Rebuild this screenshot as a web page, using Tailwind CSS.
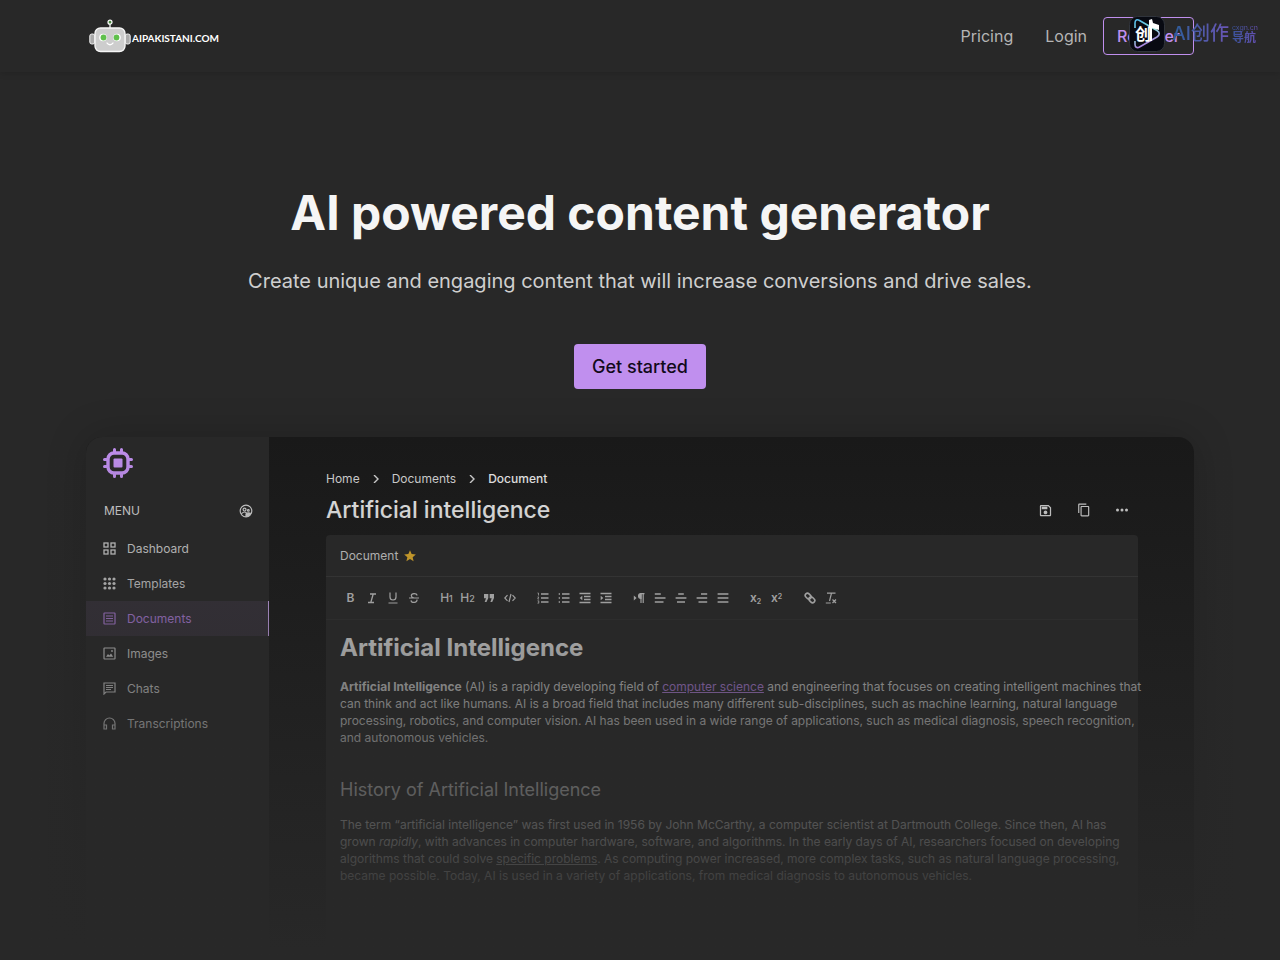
<!DOCTYPE html>
<html lang="en">
<head>
<meta charset="utf-8">
<meta name="viewport" content="width=device-width, initial-scale=1">
<title>AI powered content generator</title>
<script src="https://cdn.jsdelivr.net/npm/@tailwindcss/browser@4"></script>
</head>
<body class="flex min-h-screen flex-col bg-[#282828] font-['Inter',sans-serif] text-[#d6d6d6]">

<header class="relative shadow-[0_2px_6px_rgba(0,0,0,0.12)]">
  <div class="mx-auto flex h-18 w-full max-w-[1140px] items-center justify-between px-4">
    <a href="#" class="flex items-center pl-[3px]" aria-label="AIPAKISTANI.COM">
      <svg class="h-[34px] w-[43px]" viewBox="0 0 43 34" fill="none">
        <path d="M21 10V4" stroke="#d8d8d8" stroke-width="1.5"/>
        <circle cx="21" cy="3.2" r="2" fill="#4c8a42" stroke="#fff" stroke-width="1.2"/>
        <rect x=".8" y="15" width="5" height="10" rx="2" fill="#aaa" stroke="#f2f2f2"/>
        <rect x="36.2" y="15" width="5" height="10" rx="2" fill="#aaa" stroke="#f2f2f2"/>
        <rect x="6" y="9" width="30" height="23.5" rx="5.5" fill="#cdcdcd" stroke="#f6f6f6" stroke-width="1.4"/>
        <circle cx="14" cy="18.500" r="3.800" fill="#fff"/><circle cx="14.500" cy="18.500" r="2.900" fill="#5fc04c"/>
        <circle cx="28" cy="18.500" r="3.800" fill="#fff"/><circle cx="27.500" cy="18.500" r="2.900" fill="#5fc04c"/>
        <path d="M18 24c1.500 2.400 4.500 2.400 6 0" stroke="#fff" stroke-width="1.400" stroke-linecap="round"/>
      </svg>
      <span class="pt-1 font-['Lato',sans-serif] text-[10px] font-bold text-white">AIPAKISTANI.COM</span>
    </a>
    <nav class="flex items-center text-base text-[#b5b5b5]">
      <a href="#" class="px-4">Pricing</a>
      <a href="#" class="px-4">Login</a>
      <a href="#" class="rounded border border-[#c08fee] px-[13px] py-[6px] font-medium text-[#c08fee]">Register</a>
    </nav>
  </div>
  <div class="pointer-events-none absolute top-4 right-[22px] flex items-center gap-[7px]">
    <svg class="size-9" viewBox="0 0 36 36" fill="none">
      <defs><linearGradient id="play" x1="8" y1="4" x2="20" y2="32" gradientUnits="userSpaceOnUse"><stop stop-color="#55bbea"/><stop offset=".5" stop-color="#8be0d8"/><stop offset="1" stop-color="#b55be0"/></linearGradient></defs>
      <rect x=".5" y=".5" width="35" height="35" rx="8" fill="#080a12" stroke="#30343c"/>
      <path d="M6 12V7c0-3 2-4 4.500-2.500L28 14.500c3 2 3 4.500 0 6.500l-17.500 10C8 32.500 6 31 6 28.500V25" stroke="url(#play)" stroke-width="1.600"/>
      <path d="M20 4l3-1 1 4 6 2v5l-7-2v13h-2V12h-1z" fill="#fff"/>
      <text x="6" y="24" fill="#fff" font-size="16" font-weight="700" font-family="Noto Sans CJK SC, sans-serif">创</text>
    </svg>
    <span class="bg-linear-to-r from-[#285c98] to-[#6a56b8] bg-clip-text font-['Inter','Noto_Sans_CJK_SC',sans-serif] text-[19px] leading-7 font-medium text-transparent">AI创作</span>
    <span class="-ml-1 flex flex-col bg-linear-to-r from-[#38539a] to-[#6650b4] bg-clip-text font-['Inter','Noto_Sans_CJK_SC',sans-serif] text-transparent">
      <span class="text-[7px] leading-[7px]">cxgn.cn</span>
      <span class="text-[12px] leading-[14px] font-bold">导航</span>
    </span>
  </div>
</header>

<main class="mx-auto flex w-full max-w-[1140px] flex-1 flex-col px-4 pt-[110px]">
  <section class="flex flex-col items-center text-center">
    <h1 class="text-5xl leading-[62px] font-bold text-[#f5f5f5]">AI powered content generator</h1>
    <p class="mt-[22px] text-xl leading-[30px] text-[#cfcfcf]">Create unique and engaging content that will increase conversions and drive sales.</p>
    <a href="#" class="mt-12 rounded bg-[#c08fee] px-[18px] py-[9px] text-lg leading-[27px] font-medium text-[#120a1a]">Get started</a>
  </section>

  <section class="relative mt-12 flex flex-1 flex-col" aria-label="Editor preview">
    <div class="flex flex-1 overflow-hidden rounded-t-2xl bg-[#191919] text-xs shadow-[0_0_40px_rgba(0,0,0,0.2)]">
      <aside class="w-[183px] shrink-0 bg-[#282828]">
        <svg class="mt-[11px] ml-[17px] size-[30px] text-[#c08fee]" viewBox="0 0 30 30" fill="none" stroke="currentColor">
          <rect x="5" y="5" width="20" height="20" rx="6" stroke-width="3.400"/>
          <rect x="10.500" y="10.500" width="9" height="9" rx="1" fill="currentColor" stroke="none"/>
          <path d="M11.500 4V1.500M18.500 4V1.500M11.500 28.500V26M18.500 28.500V26M4 11.500H1.500M4 18.500H1.500M28.500 11.500H26M28.500 18.500H26" stroke-width="3" stroke-linecap="round"/>
        </svg>
        <div class="mt-[23px] flex h-[20px] items-center justify-between pr-4 pl-[18px]">
          <span>MENU</span>
          <svg class="size-[14px]" viewBox="0 0 24 24" fill="none" stroke="currentColor" stroke-width="2"><circle cx="12" cy="12" r="10"/><circle cx="9.500" cy="9.500" r="2.500"/><circle cx="16" cy="11" r="1.500"/><path d="M4 17c2-3 6-4 9-2"/><path d="M12 21v-4c2-2 5-2 8-1l-3 4z" fill="currentColor"/></svg>
        </div>
        <nav class="mt-[10px]">
          <a href="#" class="flex h-[35px] items-center gap-[11px] pl-[17px]">
            <svg class="size-[13px]" viewBox="0 0 13 13" fill="none" stroke="currentColor" stroke-width="1.300"><rect x="1" y="1" width="4" height="4"/><rect x="8" y="1" width="4" height="4"/><rect x="1" y="8" width="4" height="4"/><rect x="8" y="8" width="4" height="4"/></svg>Dashboard</a>
          <a href="#" class="flex h-[35px] items-center gap-[11px] pl-[17px]">
            <svg class="size-[13px]" viewBox="0 0 13 13" fill="currentColor"><circle cx="2" cy="2" r="1.600"/><circle cx="6.500" cy="2" r="1.600"/><circle cx="11" cy="2" r="1.600"/><circle cx="2" cy="6.500" r="1.600"/><circle cx="6.500" cy="6.500" r="1.600"/><circle cx="11" cy="6.500" r="1.600"/><circle cx="2" cy="11" r="1.600"/><circle cx="6.500" cy="11" r="1.600"/><circle cx="11" cy="11" r="1.600"/></svg>Templates</a>
          <a href="#" class="flex h-[35px] items-center gap-[11px] border-r border-[#d8b0ff] bg-[#c08fee]/10 pl-[17px] text-[#b480e0]">
            <svg class="size-[13px]" viewBox="0 0 13 13" fill="none" stroke="currentColor" stroke-width="1.200"><rect x="1" y="1" width="11" height="11" rx=".5"/><path d="M3 4h7M3 6.500h7M3 9h7"/></svg>Documents</a>
          <a href="#" class="flex h-[35px] items-center gap-[11px] pl-[17px]">
            <svg class="size-[13px]" viewBox="0 0 13 13" fill="none" stroke="currentColor" stroke-width="1.200"><rect x="1" y="1" width="11" height="11" rx=".5"/><path d="M3 9.800 5 7l1.300 1.500L8 6.500l2.200 3.300z" fill="currentColor" stroke="none"/><circle cx="9" cy="4" r=".9" fill="currentColor" stroke="none"/></svg>Images</a>
          <a href="#" class="flex h-[35px] items-center gap-[11px] pl-[17px]">
            <svg class="size-[13px]" viewBox="0 0 13 13" fill="none" stroke="currentColor" stroke-width="1.200"><path d="M1 12V1h11v9H3z"/><path d="M3 3.500h7M3 5.500h7M3 7.500h5"/></svg>Chats</a>
          <a href="#" class="flex h-[35px] items-center gap-[11px] pl-[17px]">
            <svg class="size-[13px]" viewBox="0 0 13 13" fill="none" stroke="currentColor" stroke-width="1.200"><path d="M1 8V6.500a5.500 5.500 0 0 1 11 0V8M1 8v4h2.500V8zM9.500 8v4H12V8z"/></svg>Transcriptions</a>
        </nav>
      </aside>

      <div class="flex min-w-0 flex-1 flex-col px-14 pt-8 pl-[57px]">
        <nav class="flex h-[20px] items-center gap-3" aria-label="Breadcrumb">
          <a href="#">Home</a>
          <svg class="size-2" viewBox="0 0 8 8" fill="none" stroke="currentColor" stroke-width="1.400"><path d="M2 0l4 4-4 4"/></svg>
          <a href="#">Documents</a>
          <svg class="size-2" viewBox="0 0 8 8" fill="none" stroke="currentColor" stroke-width="1.400"><path d="M2 0l4 4-4 4"/></svg>
          <span class="font-medium text-[#ececec]">Document</span>
        </nav>
        <div class="mt-[5px] flex h-8 items-center justify-between">
          <h2 class="text-[23px] font-medium text-[#f0f0f0]">Artificial intelligence</h2>
          <div class="flex gap-6 pr-[9px]">
            <button type="button" aria-label="Save"><svg class="size-[15px]" viewBox="0 0 24 24" fill="currentColor"><path d="M17 3H5c-1.110 0-2 .9-2 2v14c0 1.100.89 2 2 2h14c1.100 0 2-.9 2-2V7l-4-4zm2 16H5V5h11.170L19 7.830V19zm-7-7c-1.660 0-3 1.340-3 3s1.340 3 3 3 3-1.340 3-3-1.340-3-3-3zM6 6h9v4H6z"/></svg></button>
            <button type="button" aria-label="Copy"><svg class="size-[14px]" viewBox="0 0 24 24" fill="currentColor"><path d="M16 1H4c-1.100 0-2 .9-2 2v14h2V3h12V1zm3 4H8c-1.100 0-2 .9-2 2v14c0 1.100.9 2 2 2h11c1.100 0 2-.9 2-2V7c0-1.100-.9-2-2-2zm0 16H8V7h11v14z"/></svg></button>
            <button type="button" aria-label="More"><svg class="size-[14px]" viewBox="0 0 14 14" fill="currentColor"><circle cx="2.500" cy="7" r="1.500"/><circle cx="7" cy="7" r="1.500"/><circle cx="11.500" cy="7" r="1.500"/></svg></button>
          </div>
        </div>

        <article class="mt-[9px] flex-1 rounded-t-sm bg-[#282828]">
          <div class="flex h-[42px] items-center gap-[5px] border-b border-[#383838] px-[14px]">
            <span>Document</span>
            <svg class="size-[14px] text-[#edb62b]" viewBox="0 0 24 24" fill="currentColor"><path d="M12 17.270L18.180 21l-1.640-7.030L22 9.240l-7.190-.61L12 2 9.190 8.630 2 9.240l5.460 4.730L5.820 21z"/></svg>
          </div>
          <div class="flex h-[43px] items-center gap-3 border-b border-[#303030] px-[14px] *:flex [&_button]:flex [&_button]:h-5 [&_button]:w-[21px] [&_button]:items-center [&_button]:justify-center [&_svg]:size-3">
            <div>
              <button type="button" aria-label="Bold"><span class="font-semibold">B</span></button>
              <button type="button" aria-label="Italic"><svg viewBox="0 0 12 12" fill="none" stroke="currentColor" stroke-width="1.300"><path d="M4 2h6M2 10.500h6M7.200 2 4.800 10.500"/></svg></button>
              <button type="button" aria-label="Underline"><svg viewBox="0 0 12 12" fill="none" stroke="currentColor" stroke-width="1.200"><path d="M3 .5v4.500a3 3 0 0 0 6 0V.5M1.500 11h9"/></svg></button>
              <button type="button" aria-label="Strikethrough"><svg viewBox="0 0 12 12" fill="none" stroke="currentColor" stroke-width="1.200"><path d="M9 3.500C8.600 1 3.300 1 3.300 3.700c0 1.300 1.500 1.900 2.700 2.300M1 6h10M9 7.500c.5 3.500-5.500 4-6 .8"/></svg></button>
            </div>
            <div>
              <button type="button" aria-label="Heading 1"><span class="font-medium">H<span class="text-[9px]">1</span></span></button>
              <button type="button" aria-label="Heading 2"><span class="font-medium">H<span class="text-[9px]">2</span></span></button>
              <button type="button" aria-label="Quote"><svg viewBox="0 0 12 12" fill="currentColor"><path d="M1 2h4.300v4L3.500 10H1.700L3 6.300H1zM6.700 2H11v4L9.200 10H7.400l1.300-3.700h-2z"/></svg></button>
              <button type="button" aria-label="Code"><svg viewBox="0 0 12 12" fill="none" stroke="currentColor" stroke-width="1.200"><path d="M3.500 3.200.8 6l2.700 2.800M8.500 3.200 11.200 6 8.500 8.800M7 2 5 10"/></svg></button>
            </div>
            <div>
              <button type="button" aria-label="Numbered list"><svg viewBox="0 0 12 12" fill="none" stroke="currentColor" stroke-width="1.300"><path d="M4 2h7.500M4 6h7.500M4 10h7.500"/><path d="M.5 1h1v2.500M.5 5h1.300L.7 7h1.300M.5 8.800h1.300v2.400H.5M1 10h.8" stroke-width=".8"/></svg></button>
              <button type="button" aria-label="Bulleted list"><svg viewBox="0 0 12 12" fill="none" stroke="currentColor" stroke-width="1.300"><path d="M4 2h7.500M4 6h7.500M4 10h7.500M.7 2H2M.7 6H2M.7 10H2"/></svg></button>
              <button type="button" aria-label="Outdent"><svg viewBox="0 0 12 12" fill="none" stroke="currentColor" stroke-width="1.300"><path d="M.5 1.500h11M5 4.500h6.500M5 7.500h6.500M.5 10.500h11"/><path d="M3.300 3.700v4.600L.7 6z" fill="currentColor" stroke="none"/></svg></button>
              <button type="button" aria-label="Indent"><svg viewBox="0 0 12 12" fill="none" stroke="currentColor" stroke-width="1.300"><path d="M.5 1.500h11M5 4.500h6.500M5 7.500h6.500M.5 10.500h11"/><path d="M.7 3.700v4.600L3.300 6z" fill="currentColor" stroke="none"/></svg></button>
            </div>
            <div>
              <button type="button" aria-label="Text direction"><svg viewBox="0 0 12 12" fill="none" stroke="currentColor" stroke-width="1.200"><path d="M.8 3.500v5L3.600 6z" fill="currentColor" stroke="none"/><path d="M8 1.600A2.400 2.400 0 0 0 8 6.500z" fill="currentColor"/><path d="M7 1.600h4.500M8 2v9M10.200 2v9"/></svg></button>
              <button type="button" aria-label="Align left"><svg viewBox="0 0 12 12" fill="none" stroke="currentColor" stroke-width="1.300"><path d="M.8 2h6M.8 6H11.500M.8 10H9.500"/></svg></button>
              <button type="button" aria-label="Align center"><svg viewBox="0 0 12 12" fill="none" stroke="currentColor" stroke-width="1.300"><path d="M3.200 2h5.600M.6 6h10.800M2 10h8"/></svg></button>
              <button type="button" aria-label="Align right"><svg viewBox="0 0 12 12" fill="none" stroke="currentColor" stroke-width="1.300"><path d="M5 2h6.200M.6 6h10.600M2.500 10h8.700"/></svg></button>
              <button type="button" aria-label="Justify"><svg viewBox="0 0 12 12" fill="none" stroke="currentColor" stroke-width="1.300"><path d="M.6 2h10.800M.6 6h10.800M.6 10h10.800"/></svg></button>
            </div>
            <div>
              <button type="button" aria-label="Subscript"><span class="font-semibold">x<sub class="text-[7px]">2</sub></span></button>
              <button type="button" aria-label="Superscript"><span class="font-semibold">x<sup class="text-[7px]">2</sup></span></button>
            </div>
            <div>
              <button type="button" aria-label="Link"><svg viewBox="0 0 12 12" fill="none" stroke="currentColor" stroke-width="1.600"><rect x="-3" y="-2.200" width="6.500" height="4.400" rx="2.200" transform="translate(4 4) rotate(45)"/><rect x="-3.500" y="-2.200" width="6.500" height="4.400" rx="2.200" transform="translate(8 8) rotate(45)"/></svg></button>
              <button type="button" aria-label="Clear formatting"><svg viewBox="0 0 12 12" fill="none" stroke="currentColor" stroke-width="1.200"><path d="M2 1.200h8.500M6.500 1.200 4.500 9M.8 11h5M7.500 7.500l3.500 3.500M11 7.500 7.500 11"/></svg></button>
            </div>
          </div>
          <div class="pt-3 pl-[14px] leading-[17px] whitespace-nowrap">
            <h3 class="text-2xl leading-8 font-bold text-[#f0f0f0]">Artificial Intelligence</h3>
            <p class="mt-[14px]"><strong class="font-bold">Artificial Intelligence</strong> (AI) is a rapidly developing field of <a href="#" class="text-[#b480e0] underline">computer science</a> and engineering that focuses on creating intelligent machines that<br>can think and act like humans. AI is a broad field that includes many different sub-disciplines, such as machine learning, natural language<br>processing, robotics, and computer vision. AI has been used in a wide range of applications, such as medical diagnosis, speech recognition,<br>and autonomous vehicles.</p>
            <h4 class="mt-8 text-lg leading-6">History of Artificial Intelligence</h4>
            <p class="mt-[14px]">The term “artificial intelligence” was first used in 1956 by John McCarthy, a computer scientist at Dartmouth College. Since then, AI has<br>grown <em>rapidly</em>, with advances in computer hardware, software, and algorithms. In the early days of AI, researchers focused on developing<br>algorithms that could solve <u>specific problems</u>. As computing power increased, more complex tasks, such as natural language processing,<br>became possible. Today, AI is used in a variety of applications, from medical diagnosis to autonomous vehicles.</p>
          </div>
        </article>
      </div>
    </div>
    <div class="pointer-events-none absolute inset-x-[-60px] inset-y-0 bg-linear-to-b from-[#282828]/0 to-[#282828] to-98%"></div>
  </section>
</main>
</body>
</html>
